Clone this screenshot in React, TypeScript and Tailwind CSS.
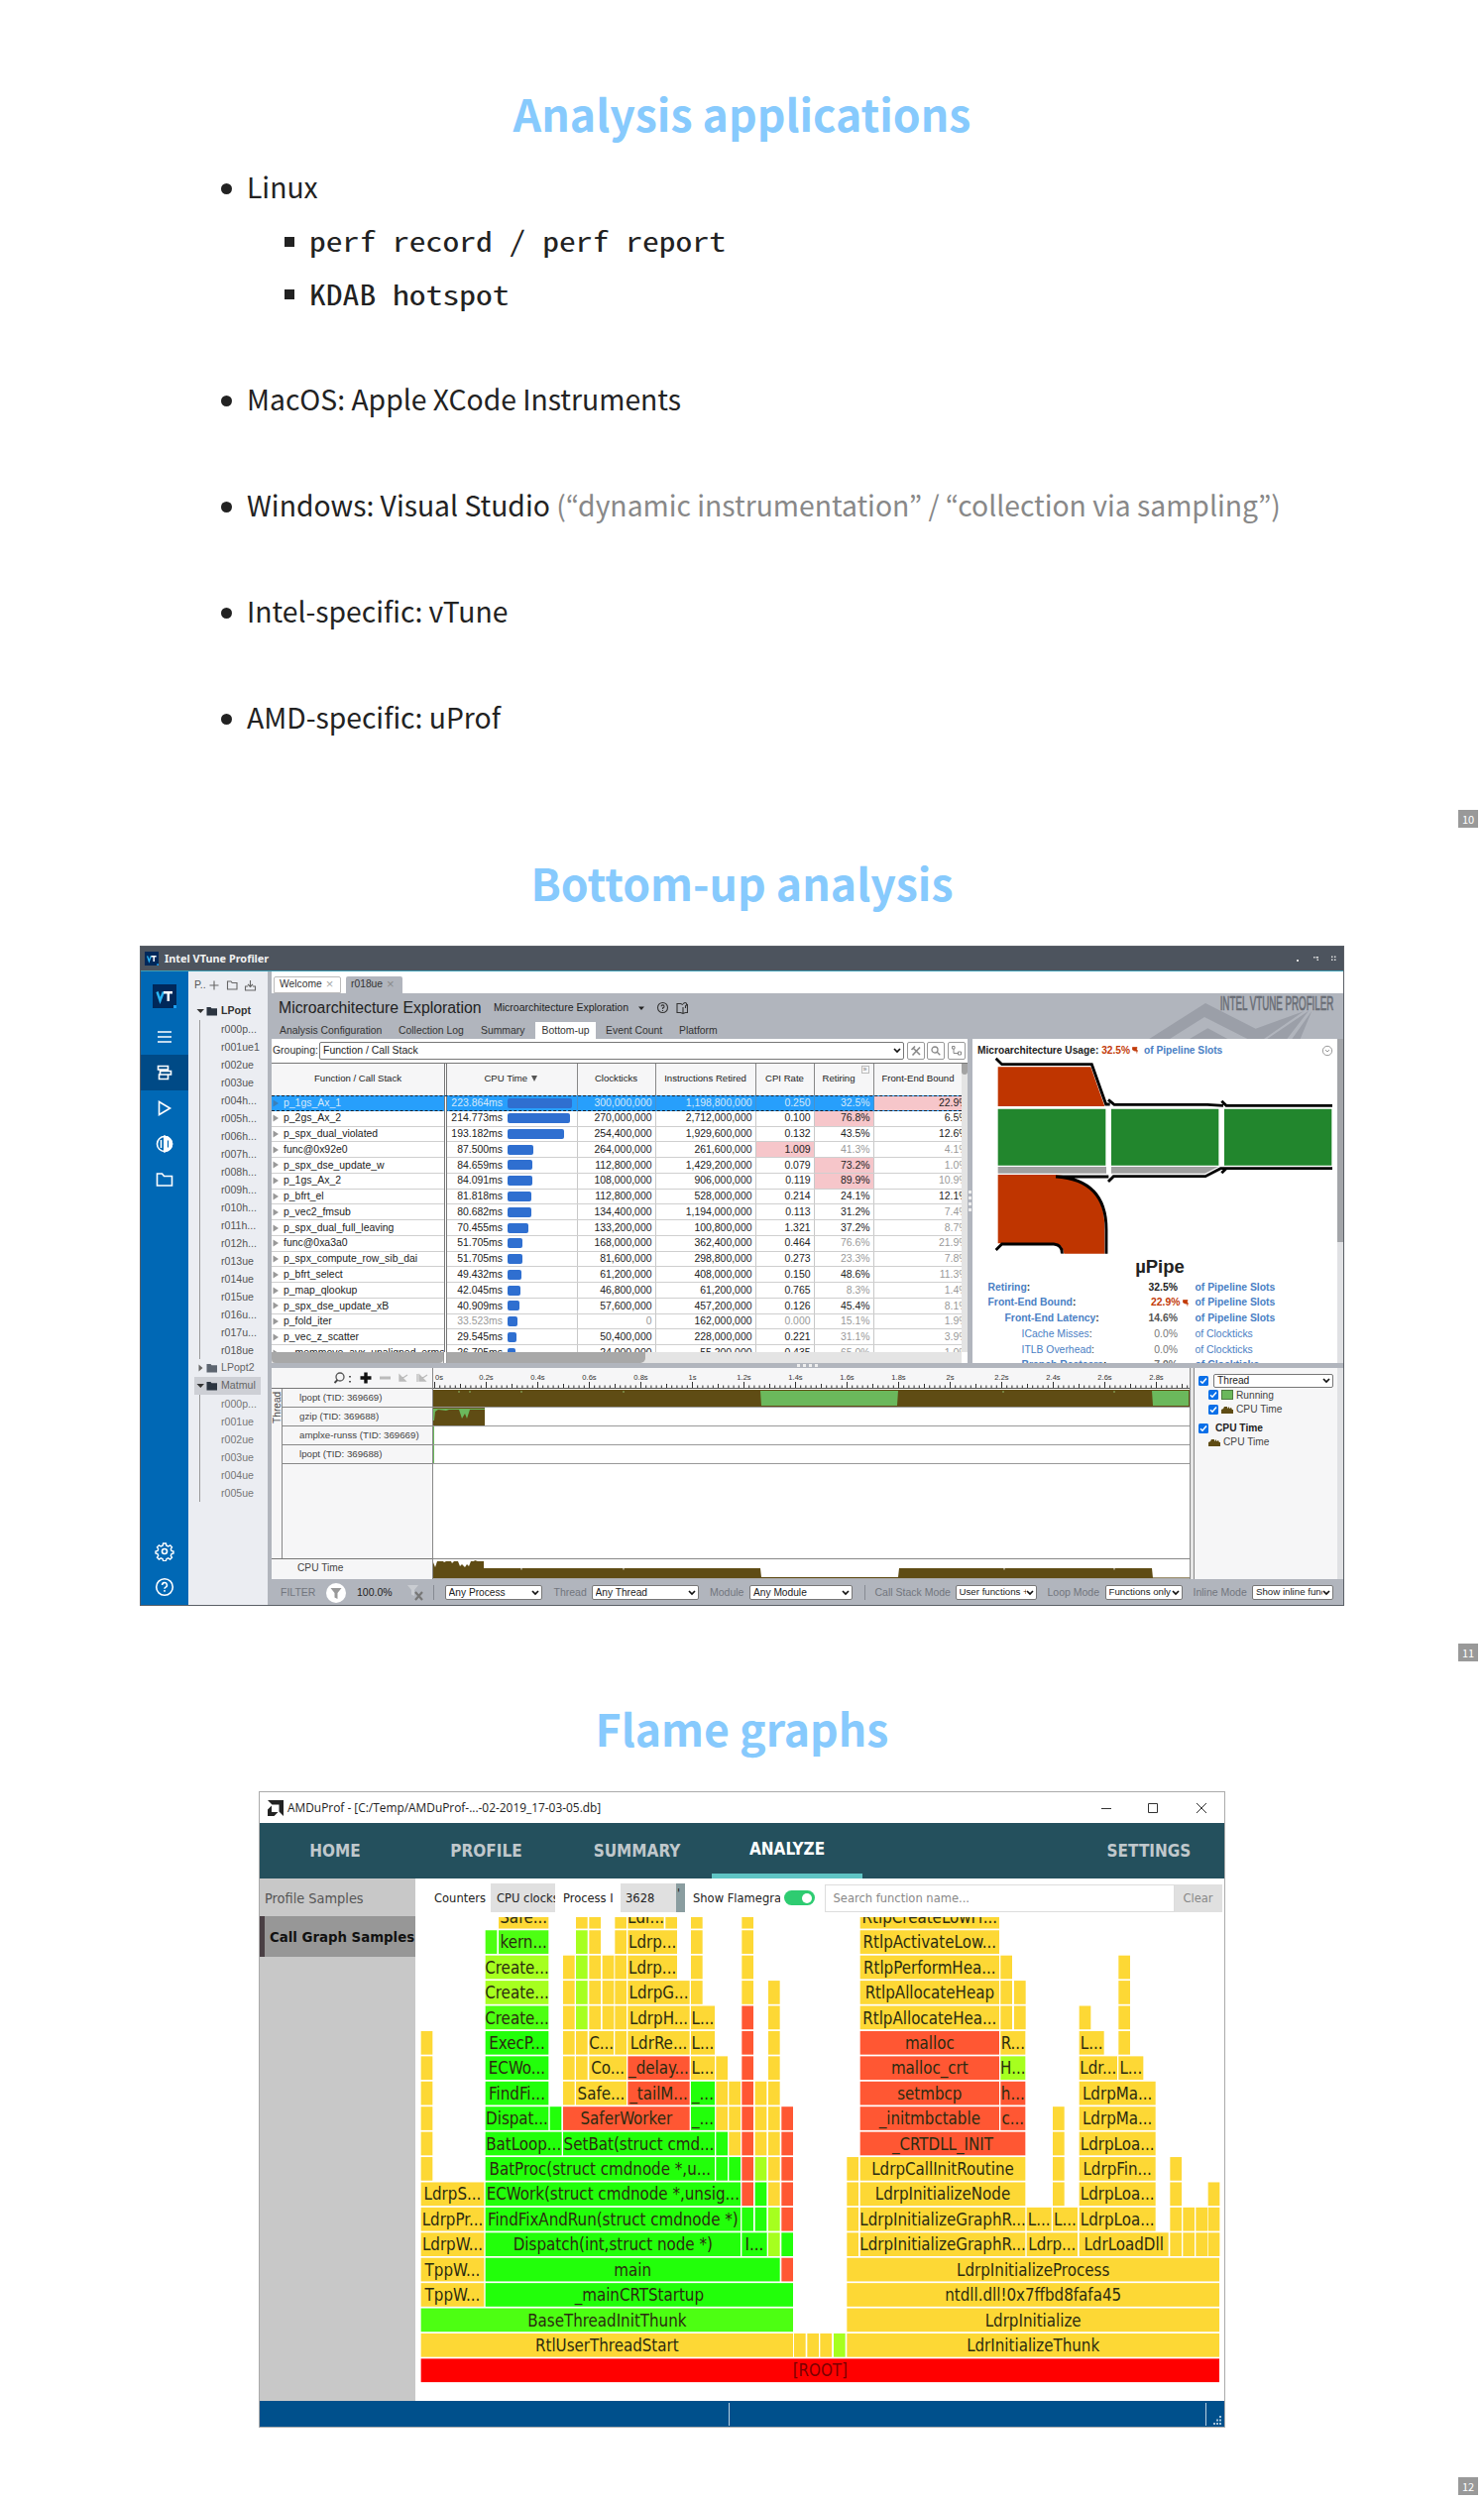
import React from "react";

const SLIDE = "font-['Noto_Sans_CJK_KR',sans-serif]";
const Y = "#fdd835";
const R = "#ff5733";
const G = "#22ff0a";
const G2 = "#4dff12";
const L = "#a6ff1f";

/* ---------- shared slide parts ---------- */

function PageNumber({ n }: { n: number }) {
  return (
    <div className="mr-[6px] mt-auto flex h-[18px] w-[20px] items-center justify-center self-end bg-[#999] font-['Noto_Sans_CJK_KR',sans-serif] text-[11px] leading-none text-white">
      {n}
    </div>
  );
}

function Title({ children, className }: { children: React.ReactNode; className: string }) {
  return (
    <h1 className={"whitespace-nowrap text-center font-['Noto_Sans_CJK_KR',sans-serif] text-[44.600px] font-bold leading-[60px] text-[#87cafd] " + className}>
      {children}
    </h1>
  );
}

function Item({ children, className = "" }: { children: React.ReactNode; className?: string }) {
  return (
    <li className={"flex h-[53.5px] items-center " + className}>
      <span className="mr-[15px] h-[11px] w-[11px] rounded-full bg-[#222]" />
      <span className="whitespace-nowrap pb-[4px]">{children}</span>
    </li>
  );
}

function SubItem({ children }: { children: React.ReactNode }) {
  return (
    <li className="flex h-[53.5px] items-center pl-[64px] font-['Noto_Sans_Mono_CJK_KR','Noto_Sans_Mono_CJK_SC','Liberation_Mono',monospace] text-[28px]">
      <span className="mr-[15px] h-[10px] w-[10px] bg-[#222]" />
      <span className="inline-block origin-left scale-x-[1.2] whitespace-pre pb-[3px]">{children}</span>
    </li>
  );
}

/* ---------- VTune window ---------- */

function VtLogo({ size }: { size: number }) {
  return (
    <svg width={size} height={size} viewBox="0 0 24 24">
      <rect width="24" height="24" fill="#00285a" />
      <path d="M4.5 7.5l3 9 3.4-9" fill="none" stroke="#29b6f6" strokeWidth="2.4" />
      <path d="M11 8.300h9M15.800 8v9" fill="none" stroke="#fff" strokeWidth="2.500" />
      <rect x="21" y="21" width="3" height="3" fill="#1da0f2" />
    </svg>
  );
}

function Folder({ fill }: { fill: string }) {
  return (
    <svg width="12" height="10" viewBox="0 0 12 10" className="mr-[3px]">
      <path d="M0.500 1h4l1 1.300h5.500v7.200h-10.500z" fill={fill} />
    </svg>
  );
}

function TreeFolder({ name, open, bold, sel }: { name: string; open?: boolean; bold?: boolean; sel?: boolean }) {
  return (
    <div className={"ml-[6px] flex h-[18px] w-[67px] items-center pl-[2px] " + (sel ? "bg-[#cdcfd5] " : "") + (bold ? "font-bold text-[#333]" : "text-[#666]")}>
      <svg width="10" height="8" viewBox="0 0 10 8">
        {open ? <path d="M0.500 2h7.500l-3.700 4z" fill="#333" /> : <path d="M2.500 0.500v7l4-3.500z" fill="#666" />}
      </svg>
      <Folder fill={open ? "#2b3440" : "#5d6570"} />
      {name}
    </div>
  );
}

function TreeLeaves({ names, color }: { names: string[]; color: string }) {
  return (
    <div className="ml-[11px] border-l border-[#999] pl-[21px]">
      {names.map((n, i) => (
        <div key={i} className={"h-[18px] leading-[18px] " + color}>{n}</div>
      ))}
    </div>
  );
}

function RailIcon({ children, className = "" }: { children: React.ReactNode; className?: string }) {
  return (
    <div className={"flex h-[36px] items-center justify-center " + className}>
      <svg width="20" height="20" viewBox="0 0 20 20" fill="none" stroke="#fff" strokeWidth="1.600">{children}</svg>
    </div>
  );
}

function Rail() {
  return (
    <div className="flex w-[48px] flex-col bg-[#0068b5]">
      <div className="flex h-[48px] items-end justify-center pb-[11px]"><VtLogo size={24} /></div>
      <RailIcon><path d="M3 5h14M3 10h14M3 15h14" /></RailIcon>
      <RailIcon className="bg-[#004a86]">
        <path d="M3.500 3.500h10v3.500h-10zM5.500 7v3M5.500 8.500h11v3.500h-11zM4.500 12h9v4.500h-9z" />
      </RailIcon>
      <RailIcon><path d="M4.500 3.500v13l11-6.500z" /></RailIcon>
      <RailIcon>
        <circle cx="10" cy="10" r="7.500" />
        <path d="M10 1.500v17" strokeWidth="2" />
        <path d="M10 2.500a7.500 7.500 0 0 1 0 15z" fill="#fff" />
        <path d="M6.500 6v8" />
        <path d="M13.500 6.500v7" stroke="#0068b5" strokeWidth="1.200" />
      </RailIcon>
      <RailIcon><path d="M2.500 4h5l2 2.500h8v9.500h-15z" /></RailIcon>
      <div className="mt-auto">
        <RailIcon>
          <circle cx="10" cy="10" r="2.500" />
          <path d="M8.600 2h2.800l.5 2.200 1.800.8 2-1.200 1.800 2-1.200 1.900.7 1.700 2 .6v2l-2 .6-.7 1.800 1.200 1.800-1.900 1.900-1.900-1.200-1.800.8-.5 2H8.600l-.5-2-1.800-.8-1.900 1.200-1.900-1.900 1.200-1.800L3 12.600 1 12v-2l2-.6.7-1.700-1.200-1.900 1.900-2 1.900 1.200 1.800-.8z" strokeWidth="1.400" />
        </RailIcon>
        <RailIcon>
          <circle cx="10" cy="10" r="8.300" />
          <path d="M7.600 8a2.400 2.400 0 1 1 3.500 2.100c-.8.400-1.100.8-1.100 1.600M10 13v1.700" />
        </RailIcon>
      </div>
    </div>
  );
}

const results = ["r000p...", "r001ue1", "r002ue", "r003ue", "r004h...", "r005h...", "r006h...", "r007h...", "r008h...", "r009h...", "r010h...", "r011h...", "r012h...", "r013ue", "r014ue", "r015ue", "r016u...", "r017u...", "r018ue"];
const matmul = ["r000p...", "r001ue", "r002ue", "r003ue", "r004ue", "r005ue"];

function Tree() {
  return (
    <div className="w-[80px] bg-[#ebedf2] text-[10.600px]">
      <div className="flex h-[31px] items-center pb-[4px] pl-[6px] text-[#555]">
        P..
        <svg width="50" height="14" viewBox="0 0 50 14" fill="none" stroke="#666" strokeWidth="1.100" className="ml-[3px]">
          <path d="M5 2.500v9M0.500 7h9M18.500 3h3.500l1.200 1.500h4.800v6.500h-9.500zM41.500 2v6M39 6l2.500 2.500 2.500-2.500M39 8h-2.500v4h10v-4h-2.500" />
        </svg>
      </div>
      <TreeFolder name="LPopt" open bold />
      <TreeLeaves names={results} color="text-[#555]" />
      <TreeFolder name="LPopt2" />
      <TreeFolder name="Matmul" open sel />
      <TreeLeaves names={matmul} color="text-[#777]" />
    </div>
  );
}

type Row = [string, string, number, string, string, string, string, string, string];
/* name, time, bar px, clockticks, instructions, cpi, retiring, front-end, flags:
   t/c = dim time/clockticks, i = hot cpi, I = dim cpi, r = hot retiring, R = dim retiring, F = dim front-end */
const rows: Row[] = [
  ["p_1gs_Ax_1", "223.864ms", 65, "300,000,000", "1,198,800,000", "0.250", "32.5%", "22.9%", ""],
  ["p_2gs_Ax_2", "214.773ms", 63, "270,000,000", "2,712,000,000", "0.100", "76.8%", "6.5%", "r"],
  ["p_spx_dual_violated", "193.182ms", 57, "254,400,000", "1,929,600,000", "0.132", "43.5%", "12.6%", ""],
  ["func@0x92e0", "87.500ms", 26, "264,000,000", "261,600,000", "1.009", "41.3%", "4.1%", "iRF"],
  ["p_spx_dse_update_w", "84.659ms", 25, "112,800,000", "1,429,200,000", "0.079", "73.2%", "1.0%", "rF"],
  ["p_1gs_Ax_2", "84.091ms", 25, "108,000,000", "906,000,000", "0.119", "89.9%", "10.9%", "rF"],
  ["p_bfrt_el", "81.818ms", 24, "112,800,000", "528,000,000", "0.214", "24.1%", "12.1%", ""],
  ["p_vec2_fmsub", "80.682ms", 24, "134,400,000", "1,194,000,000", "0.113", "31.2%", "7.4%", "F"],
  ["p_spx_dual_full_leaving", "70.455ms", 21, "133,200,000", "100,800,000", "1.321", "37.2%", "8.7%", "F"],
  ["func@0xa3a0", "51.705ms", 15, "168,000,000", "362,400,000", "0.464", "76.6%", "21.9%", "RF"],
  ["p_spx_compute_row_sib_dai", "51.705ms", 15, "81,600,000", "298,800,000", "0.273", "23.3%", "7.8%", "RF"],
  ["p_bfrt_select", "49.432ms", 14, "61,200,000", "408,000,000", "0.150", "48.6%", "11.3%", "F"],
  ["p_map_qlookup", "42.045ms", 13, "46,800,000", "61,200,000", "0.765", "8.3%", "1.4%", "RF"],
  ["p_spx_dse_update_xB", "40.909ms", 12, "57,600,000", "457,200,000", "0.126", "45.4%", "8.1%", "F"],
  ["p_fold_iter", "33.523ms", 10, "0", "162,000,000", "0.000", "15.1%", "1.9%", "tcIRF"],
  ["p_vec_z_scatter", "29.545ms", 9, "50,400,000", "228,000,000", "0.221", "31.1%", "3.9%", "RF"],
  ["__memmove_avx_unaligned_erms", "26.705ms", 8, "24,000,000", "55,200,000", "0.435", "65.0%", "1.0%", "RF"],
];

const cell = "flex shrink-0 items-center justify-end pr-[3px] border-l ";

function GridRow({ r, sel }: { r: Row; sel: boolean }) {
  const f = r[8];
  const c = (dim: string, hot = "") =>
    cell + (sel ? "border-[#4a90c8] " : "border-[#c8c8c8] ") + (f.includes(dim) ? "text-[#999] " : "") + (hot && f.includes(hot) ? "bg-[#f6c6ca] " : "");
  return (
    <div className={"flex h-[15.780px] shrink-0 " + (sel ? "border-y border-dashed border-[#123] bg-[#279ffc] text-[#d6e9fa]" : "border-b border-[#cfcfcf]")}>
      <div className="flex w-[174px] shrink-0 items-center whitespace-nowrap">
        <svg width="12" height="8" viewBox="0 0 12 8" className="shrink-0"><path d="M1.500 0.500v7l5.500-3.500z" fill={sel ? "#3b7fb8" : "#999"} /></svg>
        {r[0]}
      </div>
      <div className="h-[17px] w-[3px] shrink-0 border-x border-[#777] bg-white" />
      <div className={"flex w-[130.500px] shrink-0 items-center " + (f.includes("t") ? "text-[#999]" : "")}>
        <span className="w-[56px] text-right">{r[1]}</span>
        <span className="ml-[5px] h-[10px] rounded-[2px] bg-[#2f6fd0]" style={{ width: r[2] }} />
      </div>
      <div className={c("c") + " w-[79px]"}>{r[3]}</div>
      <div className={c("~") + " w-[101px]"}>{r[4]}</div>
      <div className={c("I", "i") + " w-[59px]"}>{r[5]}</div>
      <div className={c("R", "r") + " w-[60px]"}>{r[6]}</div>
      <div className={c("F") + " w-[89px] overflow-hidden !justify-start " + (sel ? "bg-[#f6c6ca] !text-[#222]" : "")}>
        <span className="w-[95px] shrink-0 text-right">{r[7]}</span>
      </div>
    </div>
  );
}

function Head({ w, children }: { w: string; children: React.ReactNode }) {
  return <div className={"flex shrink-0 items-center justify-center overflow-hidden whitespace-nowrap border-l border-[#888] pb-[2px] text-[9.600px] " + w}>{children}</div>;
}

function Chevron() {
  return (
    <svg width="8" height="6" viewBox="0 0 8 6" className="shrink-0"><path d="M1 1l3 3 3-3" fill="none" stroke="#111" strokeWidth="1.700" /></svg>
  );
}

function Select({ children, className }: { children: React.ReactNode; className: string }) {
  return (
    <div className={"flex shrink-0 items-center rounded-[2px] border border-[#777] bg-white pl-[3px] pr-[2px] text-[#222] " + className}>
      <span className="min-w-0 flex-1 overflow-hidden whitespace-nowrap">{children}</span>
      <Chevron />
    </div>
  );
}

function SmallButton({ children }: { children: React.ReactNode }) {
  return (
    <div className="ml-[2.500px] flex h-[18px] w-[18px] shrink-0 items-center justify-center rounded-[2px] border border-[#999]">
      <svg width="12" height="12" viewBox="0 0 12 12" fill="none" stroke="#888" strokeWidth="1.300">{children}</svg>
    </div>
  );
}

function Grid() {
  return (
    <div className="flex w-[702px] flex-col bg-white text-[10.450px] text-[#222]">
      <div className="flex h-[25px] shrink-0 items-center border-b border-[#777] pl-[1px]">
        <span className="w-[47px] text-[#333]">Grouping:</span>
        <Select className="h-[18px] w-[590px]">Function / Call Stack</Select>
        <SmallButton><path d="M3.500 3.500l6.500 6.500M10 2.500l-7.500 8M1.500 5l3.500-3.500" strokeWidth="1.600" /></SmallButton>
        <SmallButton><circle cx="5" cy="5" r="3" /><path d="M7.300 7.300l3 3" /></SmallButton>
        <SmallButton><path d="M1.500 1.500h2.500v2.500h-2.500zM3 4v4.500h4M7.500 7h3v3h-3z" strokeWidth="1" /></SmallButton>
      </div>
      <div className="flex min-h-0 flex-1">
        <div className="flex w-[695.500px] flex-col overflow-hidden">
          <div className="flex h-[32px] shrink-0 bg-[#f6f6f7]">
            <div className="flex w-[174px] shrink-0 items-center justify-center pb-[2px] text-[9.600px]">Function / Call Stack</div>
            <div className="w-[3px] shrink-0 border-x border-[#777] bg-white" />
            <div className="flex w-[130.500px] shrink-0 items-center justify-center pb-[2px] pr-[2px] text-[9.600px]">
              CPU Time
              <svg width="6" height="6" viewBox="0 0 6 6" className="ml-[4px]"><path d="M0 0h6l-3 6z" fill="#555" /></svg>
            </div>
            <Head w="w-[79px]">Clockticks</Head>
            <Head w="w-[101px]">Instructions Retired</Head>
            <Head w="w-[59px]">CPI Rate</Head>
            <Head w="w-[60px] gap-[6px] pl-[4px]">
              <span>Retiring</span>
              <span className="mb-[18px] h-[8px] w-[8px] border border-[#bbb] text-center text-[7px] leading-[5px] text-[#777]">»</span>
            </Head>
            <Head w="w-[90px]">Front-End Bound</Head>
          </div>
          <div className="flex h-[259px] flex-col overflow-hidden">
            {rows.map((r, i) => <GridRow key={i} r={r} sel={i === 0} />)}
          </div>
          <div className="flex h-[11px] shrink-0 bg-[#e4e4e4]">
            <div className="w-[173px] rounded-b-[4px] bg-[#a8a8a8]" />
            <div className="w-[4px] border-x border-[#999] bg-white" />
            <div className="w-[200px] rounded-br-[5px] bg-[#a8a8a8]" />
          </div>
        </div>
        <div className="mb-[11px] flex-1 bg-[#e4e4e4]"><div className="h-[11px] rounded-b-[3px] bg-[#a3a3a3]" /></div>
      </div>
    </div>
  );
}

function Flag() {
  return <svg width="6" height="7" viewBox="0 0 6 7" className="mx-[2px]"><path d="M0.500 0.500H5L4.500 2.500 5.500 4.300 2.500 4 0.500 3zM4.800 3.500V6.500" fill="#c23a08" stroke="#c23a08" strokeWidth="0.700" /></svg>;
}

function Metric({ pad, name, value, of, tone = "" }: { pad: string; name: string; value: string; of: string; tone?: string }) {
  return (
    <div className={"flex h-[15.750px] shrink-0 items-center whitespace-nowrap pl-[15.500px] " + tone}>
      <div className={"w-[155px] text-[#4a80c4] " + pad}>{name}<span className="text-[#333]">:</span></div>
      {value === "22.9%" ? (
        <div className="flex w-[54px] items-center justify-end pr-[5px] text-[#c23a08]"><span>{value}</span><Flag /></div>
      ) : (
        <div className="w-[54px] pr-[17.500px] text-right">{value}</div>
      )}
      <div className="text-[#4a80c4]">{of}</div>
    </div>
  );
}

function Pipe() {
  return (
    <svg width="368.330" height="200" viewBox="33 345 1105 600" className="shrink-0">
      <path d="M110 376h281l42 119H110z" fill="#bf3500" />
      <path d="M110 702h175q148 14 148 160v79H310q-4-31-33-31H110z" fill="#bf3500" />
      <path d="M110 503h326v171H110zM453 503h325v171H453zM795 503h325v171H795z" fill="#22862d" />
      <path d="M110 678h328v20H110zM453 678h324l-40 20H453z" fill="#a0a0a0" />
      <path d="M104 350l18 18h272l43 121h12M444 475l18 15h282l48 3M787 479l14 14h321M444 723l16-16h278l46-24h338M787 697l14-14M285 708h160M285 708q153 9 153 160v73M104 930l18-18h157q26 2 25 29" fill="none" stroke="#000" strokeWidth="8.500" />
    </svg>
  );
}

function Usage() {
  return (
    <div className="flex w-[368px] flex-col overflow-hidden bg-white text-[10.400px] font-bold text-[#222]">
      <div className="flex h-[18px] shrink-0 items-center whitespace-nowrap pl-[5px] pt-[5px] text-[10.200px]">
        Microarchitecture Usage:&nbsp;<span className="text-[#c23a08]">32.5%</span><Flag />
        <span className="ml-[4px] text-[#4a80c4]">of Pipeline Slots</span>
        <svg width="12" height="12" viewBox="0 0 12 12" className="ml-auto mr-[4px]" fill="none" stroke="#999"><circle cx="6" cy="6" r="4.700" /><path d="M4 5l2 2 2-2" /></svg>
      </div>
      <Pipe />
      <div className="h-[24.500px] shrink-0 pl-[10px] text-center text-[18.500px] leading-[23px]">µPipe</div>
      <Metric pad="" name="Retiring" value="32.5%" of="of Pipeline Slots" />
      <Metric pad="" name="Front-End Bound" value="22.9%" of="of Pipeline Slots" />
      <Metric pad="pl-[17px]" name="Front-End Latency" value="14.6%" of="of Pipeline Slots" tone="text-[#555]" />
      <Metric pad="pl-[34px]" name="ICache Misses" value="0.0%" of="of Clockticks" tone="font-normal text-[#777]" />
      <Metric pad="pl-[34px]" name="ITLB Overhead" value="0.0%" of="of Clockticks" tone="font-normal text-[#777]" />
      <Metric pad="pl-[34px]" name="Branch Resteers" value="7.9%" of="of Clockticks" tone="text-[#777]" />
    </div>
  );
}

function Ruler() {
  const ticks = Array.from({ length: 147 }, (_, i) => i);
  const labels = ["0s", "0.2s", "0.4s", "0.6s", "0.8s", "1s", "1.2s", "1.4s", "1.6s", "1.8s", "2s", "2.2s", "2.4s", "2.6s", "2.8s"];
  return (
    <div className="h-[21px] shrink-0 border-b border-[#555] bg-[#f6f6f7]">
      <svg width="763" height="20" viewBox="0 0 763 20" className="block">
        {ticks.map((i) => (
          <path key={i} d={`M${1.5 + i * 5.2} ${i % 10 === 0 ? 14 : i % 5 === 0 ? 16 : 17.5}v6`} stroke="#333" />
        ))}
        {labels.map((t, i) => (
          <text key={t} x={i === 0 ? 6 : 1.5 + i * 52} y="11.500" fontSize="7.600" textAnchor="middle" fill="#333">{t}</text>
        ))}
      </svg>
    </div>
  );
}

function Track({ children, h }: { children?: React.ReactNode; h: string }) {
  return (
    <div className={"w-[763px] shrink-0 border-b border-[#999] bg-white " + h}>
      <svg width="763" height="18" viewBox="0 0 763 18" className="block">{children}</svg>
    </div>
  );
}

function Check({ className = "" }: { className?: string }) {
  return (
    <svg width="10" height="10" viewBox="0 0 10 10" className={"shrink-0 " + className}>
      <rect width="10" height="10" rx="1.500" fill="#0a6fe8" />
      <path d="M2 5.200l2 2 4-4.700" fill="none" stroke="#fff" strokeWidth="1.500" />
    </svg>
  );
}

function CpuGlyph() {
  return <svg width="12" height="8" viewBox="0 0 12 8" className="mx-[3px] shrink-0"><path d="M0 8V4l2-1 1-2h3v2l2-2v2l2-1 1 2h1v4z" fill="#5f4c14" /></svg>;
}

function TimelineLabels() {
  return (
    <div className="w-[163px] border-r border-[#888] bg-[#f6f6f7] text-[10.200px] text-[#444]">
      <div className="flex h-[21px] items-center justify-end border-b border-[#777] pr-[4px]">
        <svg width="100" height="14" viewBox="0 0 100 14" fill="none">
          <circle cx="11" cy="6" r="4" stroke="#555" strokeWidth="1.300" />
          <path d="M8.500 9l-3 3M21 5v1.500M21 10v1.500" stroke="#444" strokeWidth="1.800" />
          <path d="M37 1.500v11M31.500 7h11" stroke="#111" strokeWidth="3.400" />
          <path d="M51 7h11" stroke="#bbb" strokeWidth="3" />
          <path d="M71 4v6h6zM73 8l6-4M91 4v6h6zM93 8l6-4M89 3v8" fill="#bbb" stroke="#bbb" strokeWidth="1.300" />
        </svg>
      </div>
      <div className="flex h-[172px] border-b border-[#777]">
        <div className="w-[11px] border-r border-[#888]">
          <div className="h-[38px] rotate-180 text-center leading-[11px] [writing-mode:vertical-rl]">Thread</div>
        </div>
        <div className="flex-1">
          {["lpopt (TID: 369669)", "gzip (TID: 369688)", "amplxe-runss (TID: 369669)", "lpopt (TID: 369688)"].map((t) => (
            <div key={t} className="h-[19px] border-b border-[#888] pl-[17px] text-[9.700px] leading-[17px]">{t}</div>
          ))}
        </div>
      </div>
      <div className="h-[20px] pl-[26px] leading-[17px]">CPU Time</div>
    </div>
  );
}

function Timeline() {
  return (
    <div className="flex h-[213px] shrink-0">
      <TimelineLabels />
      <div className="flex w-[763px] flex-col bg-white">
        <Ruler />
        <Track h="h-[19px]">
          <rect y="1" width="763" height="17" fill="#5f4c14" />
          <path d="M330 2h139l-1 15H331zM725 2h37v15h-36z" fill="#6bb85c" />
          <path d="M26 2v2M37 2v2M89 2v2M192 2v2M575 2v2M687 2v2" stroke="#8fb96a" />
        </Track>
        <Track h="h-[19px]">
          <rect width="52" height="18" fill="#5f4c14" />
          <path d="M0 1h52v1H37l-3 9-2-5-3 5-3-9H16l-3 1-8-1-3 2-1 9H0z" fill="#6bb85c" />
        </Track>
        <Track h="h-[19px]"><path d="M0.500 0v18" stroke="#6bb85c" /></Track>
        <Track h="h-[19px]"><path d="M0.500 0v18" stroke="#6bb85c" /></Track>
        <div className="h-[96px] shrink-0 border-b border-[#888]" />
        <div className="h-[20px] shrink-0 border-b border-[#aaa]">
          <svg width="763" height="19" viewBox="0 0 763 19" className="block">
            <path d="M0 19V3l2 5 2-6h6l1 1 2-1h5l1 2 2-2h4l2 5 2-2 3 3 2-3 2 2 2-5h3l1-1 3 1h6V9H330l1 9h138l1-9h255l1 10z" fill="#5f4c14" />
            <path d="M0 18.500h763" stroke="#5f4c14" strokeWidth="0.600" />
            <path d="M89 9v1.500M192 9v1.500M576 9v1.500M687 9v1.500" stroke="#eee" />
          </svg>
        </div>
      </div>
      <div className="w-[5px] border-x border-[#888] bg-[#e6e6e6]" />
      <div className="w-[144px] bg-[#f6f6f7] pl-[4px] pt-[5px] text-[10.200px] text-[#444]">
        <div className="flex h-[15px] items-center"><Check className="mr-[5px]" /><Select className="h-[14px] w-[121px]">Thread</Select></div>
        <div className="flex h-[14.500px] items-center pl-[10px]">
          <Check /><span className="mx-[3px] h-[10px] w-[12px] border border-[#4d7b40] bg-[#6bb85c]" />Running
        </div>
        <div className="flex h-[15px] items-center pl-[10px]"><Check /><CpuGlyph />CPU Time</div>
        <div className="mt-[4px] flex h-[14px] items-center font-bold text-[#222]"><Check className="mr-[7px]" />CPU Time</div>
        <div className="flex h-[15px] items-center pl-[7px]"><CpuGlyph />CPU Time</div>
      </div>
      <div className="w-[6px] bg-[#e0e1e4]" />
    </div>
  );
}

function FilterBar() {
  return (
    <div className="flex h-[26px] shrink-0 items-center whitespace-nowrap bg-[#b1b5bd] pl-[9px] pt-[1px] text-[10.500px] text-[#72767e]">
      <span className="w-[46px]">FILTER</span>
      <svg width="20" height="20" viewBox="0 0 20 20"><circle cx="10" cy="10" r="10" fill="#fff" /><path d="M4.500 5h11l-4 5v6l-3-1.500V10z" fill="#999" /></svg>
      <span className="ml-[11px] w-[50px] text-[#222]">100.0%</span>
      <svg width="18" height="17" viewBox="0 0 18 17"><path d="M1 1h11l-4 5v6l-3-1.500V6z" fill="#c9ccd1" /><path d="M9 8l7 8M16 8l-7 8" stroke="#777" strokeWidth="2.200" /></svg>
      <span className="ml-[9px] h-[15px] w-px bg-[#868a92]" />
      <Select className="ml-[10.500px] h-[15px] w-[98px] text-[10.200px]">Any Process</Select>
      <span className="ml-[12px] w-[38px]">Thread</span>
      <Select className="h-[15px] w-[108.500px] text-[10.200px]">Any Thread</Select>
      <span className="ml-[11px] w-[40px]">Module</span>
      <Select className="h-[15px] w-[104px] text-[10.200px]">Any Module</Select>
      <span className="ml-[11.500px] h-[15px] w-px bg-[#868a92]" />
      <span className="ml-[10px] w-[81px]">Call Stack Mode</span>
      <Select className="h-[15px] w-[82px] text-[9.700px]">User functions +1</Select>
      <span className="ml-[11px] w-[58px]">Loop Mode</span>
      <Select className="h-[15px] w-[78px] text-[9.700px]">Functions only</Select>
      <span className="ml-[11px] w-[59.500px]">Inline Mode</span>
      <Select className="h-[15px] w-[82px] text-[9.700px]">Show inline functions</Select>
    </div>
  );
}

function VTune() {
  return (
    <div className="mx-auto flex h-[666px] w-[1215px] flex-col border border-[#5a5f66] font-['Liberation_Sans',sans-serif] text-[10.400px]">
      <div className="flex h-[25px] shrink-0 items-center border-b border-[#3f9fb5] bg-[#4d545e] pl-[4px] font-['Noto_Sans',sans-serif] text-[10.900px] font-bold text-[#f2f2f2]">
        <VtLogo size={14} />
        <span className="ml-[6px]">Intel VTune Profiler</span>
        <svg width="44" height="8" viewBox="0 0 44 8" className="ml-auto mr-[6px]" fill="#ddd">
          <path d="M3 5h2v2H3zM20 2h1.500v1.500H20zM22.500 2H25v1.500h-2.500zM23.500 4.500H25V6h-1.500zM38 1.500h1.500V3H38zM41 1.500h1.500V3H41zM38 4.500h1.500V6H38zM41 4.500h1.500V6H41z" />
        </svg>
      </div>
      <div className="flex min-h-0 flex-1">
        <Rail />
        <Tree />
        <div className="w-[4px] bg-[#b1b5bd]" />
        <div className="flex w-[1081px] flex-col bg-[#b1b5bd]">
          <div className="flex h-[22px] shrink-0 items-end bg-white pl-[2px] text-[10.300px] text-[#333]">
            <div className="mr-[5px] flex h-[17px] w-[68px] items-center rounded-t-[2px] border border-[#bbb] bg-white pb-[2px] pl-[5px]">Welcome<span className="ml-[4px] text-[13px] leading-none text-[#aaa]">×</span></div>
            <div className="flex h-[17px] w-[57px] items-center rounded-t-[2px] bg-[#b1b5bd] pb-[2px] pl-[5px]">r018ue<span className="ml-[4px] text-[13px] leading-none text-[#8a8a8a]">×</span></div>
          </div>
          <div className="relative flex h-[46px] shrink-0 flex-col">
            <svg width="200" height="46" viewBox="555 153 600 138" className="absolute right-0 top-0">
              <path d="M568 291L738 183l152 77 145-52-120 83h-50l-130-66-105 66zM690 291l55-32 60 32zM925 291l125-85-65 85zM1000 291l60-85-35 85z" fill="#9b9fa8" />
              <text x="782" y="205" textLength="344" lengthAdjust="spacingAndGlyphs" fontSize="58" fill="#696d75" stroke="#696d75" strokeWidth="2">INTEL VTUNE PROFILER</text>
            </svg>
            <div className="flex h-[29px] items-center whitespace-nowrap pl-[7px] text-[#222]">
              <span className="w-[217px] text-[15.800px]">Microarchitecture Exploration</span>
              <span className="w-[146px] text-[10.500px]">Microarchitecture Exploration</span>
              <svg width="50" height="14" viewBox="0 0 50 14" fill="none" stroke="#333" strokeWidth="1.100">
                <path d="M0 5.500h6l-3 3.500z" fill="#222" stroke="none" />
                <circle cx="24.500" cy="6.500" r="5" />
                <path d="M23 5.200a1.500 1.500 0 1 1 1.500 1.700V8M24.500 9v1M45 3.500L42.500 2.500H39v9h3.500L45 12.500l2.500-1h3V5M45 12.500V6M45.500 3a1.600 1.600 0 1 1 2 1.700V7" />
                <path d="M49.500 3v9" />
              </svg>
            </div>
            <div className="flex h-[17px] whitespace-nowrap pl-[8px] text-[10.400px] leading-[17px] text-[#333]">
              <span className="w-[120px]">Analysis Configuration</span>
              <span className="w-[83px]">Collection Log</span>
              <span className="w-[55px]">Summary</span>
              <span className="mr-[10px] w-[61px] bg-white text-center">Bottom-up</span>
              <span className="w-[74px]">Event Count</span>
              <span>Platform</span>
            </div>
          </div>
          <div className="flex h-[327px] shrink-0">
            <Grid />
            <div className="flex w-[5px] flex-col items-center justify-center gap-[3px]">
              {[0, 1, 2, 3].map((i) => <span key={i} className="h-[3px] w-[3px] bg-[#eee]" />)}
            </div>
            <Usage />
            <div className="flex-1 bg-[#e0e1e4]"><div className="h-[205px] bg-[#a3a5a9]" /></div>
          </div>
          <div className="flex h-[5px] shrink-0 items-center justify-center gap-[3px]">
            {[0, 1, 2, 3].map((i) => <span key={i} className="h-[3px] w-[3px] bg-[#eee]" />)}
          </div>
          <Timeline />
          <FilterBar />
        </div>
      </div>
    </div>
  );
}

/* ---------- uProf window ---------- */

/* Each frame is [start, end, colour, label]; positions are in thirds of a pixel. */
type Frame = [number, number, string, string?];
const u = (color: string, ...starts: number[]): Frame[] => starts.map((s) => [s, s + 35, color]);

const levels: Frame[][] = [
  [[509, 2925, "#ff0000", "[ROOT]"]],
  [[509, 1635, Y, "RtlUserThreadStart"], ...u(Y, 1638, 1678, 1717), ...u(L, 1758), [1798, 2925, Y, "LdrInitializeThunk"]],
  [[509, 1635, G2, "BaseThreadInitThunk"], [1798, 2925, Y, "LdrpInitialize"]],
  [[509, 700, Y, "TppW..."], [704, 1635, G, "_mainCRTStartup"], [1798, 2925, Y, "ntdll.dll!0x7ffbd8fafa45"]],
  [[509, 700, Y, "TppW..."], [704, 1595, G, "main"], ...u(R, 1600), [1798, 2925, Y, "LdrpInitializeProcess"]],
  [[509, 700, Y, "LdrpW..."], [704, 1476, G, "Dispatch(int,struct node *)"], [1480, 1556, G, "I..."], ...u(L, 1560), ...u(G, 1600), ...u(Y, 1798), [1838, 2338, Y, "LdrpInitializeGraphR..."], [2342, 2496, Y, "Ldrp..."], [2501, 2771, Y, "LdrLoadDll"], ...u(Y, 2776, 2815, 2854, 2891)],
  [[509, 700, Y, "LdrpPr..."], [704, 1476, G, "FindFixAndRun(struct cmdnode *)"], ...u(G, 1480, 1520), ...u(L, 1560), ...u(R, 1600), ...u(Y, 1798), [1838, 2338, Y, "LdrpInitializeGraphR..."], [2342, 2417, Y, "L..."], [2421, 2496, Y, "L..."], [2501, 2732, Y, "LdrpLoa..."], ...u(Y, 2776, 2815, 2854, 2891)],
  [[509, 700, Y, "LdrpS..."], [704, 1476, G, "ECWork(struct cmdnode *,unsig..."], ...u(R, 1480), ...u(G, 1520), ...u(Y, 1560), ...u(R, 1600), ...u(Y, 1798), [1838, 2338, Y, "LdrpInitializeNode"], ...u(Y, 2421), [2501, 2732, Y, "LdrpLoa..."], ...u(Y, 2776, 2891)],
  [...u(Y, 509), [704, 1398, G, "BatProc(struct cmdnode *,u..."], ...u(G, 1402, 1441), ...u(R, 1480), ...u(L, 1520), ...u(Y, 1560), ...u(R, 1600), ...u(Y, 1798), [1838, 2338, Y, "LdrpCallInitRoutine"], ...u(Y, 2421), [2501, 2732, Y, "LdrpFin..."], ...u(Y, 2776)],
  [...u(Y, 509), [704, 935, G, "BatLoop..."], [939, 1398, G, "SetBat(struct cmd..."], ...u(G, 1402), ...u(Y, 1441), ...u(R, 1480), ...u(Y, 1520, 1560), ...u(R, 1600), [1838, 2338, R, "_CRTDLL_INIT"], ...u(Y, 2421), [2501, 2732, Y, "LdrpLoa..."]],
  [...u(Y, 509), [704, 895, G, "Dispat..."], ...u(G, 899), [939, 1322, R, "SaferWorker"], [1326, 1398, G, "_..."], ...u(Y, 1402, 1441), ...u(R, 1480), ...u(Y, 1520, 1560), ...u(R, 1600), [1838, 2259, R, "_initmbctable"], [2263, 2338, R, "c..."], ...u(Y, 2421), [2501, 2732, Y, "LdrpMa..."]],
  [...u(Y, 509), [704, 895, G, "FindFi..."], ...u(Y, 939), [978, 1131, Y, "Safe..."], [1135, 1322, R, "_tailM..."], [1326, 1398, G, "_..."], ...u(Y, 1402, 1441), ...u(R, 1480), ...u(Y, 1520, 1560), [1838, 2259, R, "setmbcp"], [2263, 2338, R, "h..."], [2501, 2732, Y, "LdrpMa..."]],
  [...u(Y, 509), [704, 895, G, "ECWo..."], ...u(Y, 939, 978), [1018, 1131, Y, "Co..."], [1135, 1322, R, "_delay..."], [1326, 1398, Y, "L..."], ...u(Y, 1402), ...u(R, 1480), ...u(Y, 1560), [1838, 2259, R, "malloc_crt"], [2263, 2338, L, "H..."], [2501, 2616, Y, "Ldr..."], [2620, 2695, Y, "L..."]],
  [...u(Y, 509), [704, 895, G, "ExecP..."], ...u(Y, 939, 978), [1018, 1092, Y, "C..."], ...u(Y, 1096), [1135, 1322, Y, "LdrRe..."], [1326, 1398, Y, "L..."], ...u(R, 1480), ...u(Y, 1560), [1838, 2259, R, "malloc"], [2263, 2338, Y, "R..."], [2501, 2576, Y, "L..."], ...u(Y, 2620)],
  [[704, 895, G2, "Create..."], ...u(Y, 939), ...u(L, 978), ...u(Y, 1018, 1058, 1096), [1135, 1322, Y, "LdrpH..."], [1326, 1398, Y, "L..."], ...u(R, 1480), ...u(Y, 1560), [1838, 2259, Y, "RtlpAllocateHea..."], ...u(Y, 2263, 2304, 2501, 2620)],
  [[704, 895, L, "Create..."], ...u(Y, 939), ...u(L, 978), ...u(Y, 1018, 1058, 1096), [1135, 1322, Y, "LdrpG..."], ...u(Y, 1326, 1480, 1560), [1838, 2259, Y, "RtlpAllocateHeap"], ...u(Y, 2263, 2304, 2620)],
  [[704, 895, L, "Create..."], ...u(Y, 939), ...u(L, 978), ...u(Y, 1018, 1058, 1096), [1135, 1284, Y, "Ldrp..."], ...u(Y, 1326, 1480), [1838, 2259, Y, "RtlpPerformHea..."], ...u(Y, 2263, 2620)],
  [...u(G2, 704), [744, 895, G2, "kern..."], ...u(L, 978), ...u(Y, 1018, 1096), [1135, 1284, Y, "Ldrp..."], ...u(Y, 1326, 1480), [1838, 2259, Y, "RtlpActivateLow..."]],
  [[744, 895, Y, "Safe..."], ...u(Y, 978, 1018, 1096), [1135, 1244, Y, "Ldr..."], ...u(Y, 1249, 1326, 1480), [1838, 2259, Y, "RtlpCreateLowFr..."]],
];

function FlameGraph() {
  return (
    <svg width="816" height="488" viewBox="419 1934 816 488" className="block font-['DejaVu_Sans_Condensed','DejaVu_Sans',sans-serif]">
      {levels.map((frames, k) =>
        frames.map(([a, b, color, label], i) => {
          const x = 255 + a / 3;
          const w = (b - a) / 3;
          const y = 2379.400 - k * 25.420;
          return (
            <g key={k + "-" + i}>
              <rect x={x} y={y} width={w} height="23.700" fill={color} />
              {label && (
                <text x={x + w / 2} y={y + 18} textAnchor="middle" fontSize="16.800" fill={k === 0 ? "#7a0000" : "#2b2b10"}>{label}</text>
              )}
            </g>
          );
        }),
      )}
    </svg>
  );
}

function UProf() {
  return (
    <div className="mx-auto flex h-[642px] w-[975px] flex-col border border-[#aaa] bg-white font-['DejaVu_Sans_Condensed','DejaVu_Sans',sans-serif]">
      <div className="flex h-[31px] shrink-0 items-center pl-[8px] font-['Open_Sans',sans-serif] text-[11.900px] text-[#222]">
        <svg width="16" height="16" viewBox="0 0 16 16"><path d="M0 0h16v16l-4.500-4.500v-7h-7zM4 5.500v6.500h6.500L6.500 16H0V9.500z" fill="#222" /></svg>
        <span className="ml-[4px] whitespace-nowrap">AMDuProf - [C:/Temp/AMDuProf-...-02-2019_17-03-05.db]</span>
        <svg width="108" height="12" viewBox="0 0 108 12" className="ml-auto mr-[17px]" fill="none" stroke="#333">
          <path d="M1 6.500h10M48.500 1.500h9v9h-9zM97 1l10 10M107 1l-10 10" />
        </svg>
      </div>
      <div className="flex h-[56px] shrink-0 bg-[#24505d] text-[17px] font-bold text-[#c0c8cc]">
        <span className="w-[152px] text-center leading-[57px]">HOME</span>
        <span className="w-[153px] text-center leading-[57px]">PROFILE</span>
        <span className="w-[151px] text-center leading-[57px]">SUMMARY</span>
        <span className="w-[152px] border-b-[5px] border-[#5fc4c4] text-center leading-[53px] text-white">ANALYZE</span>
        <span className="ml-auto w-[152px] text-center leading-[57px]">SETTINGS</span>
      </div>
      <div className="flex min-h-0 flex-1">
        <div className="w-[157px] bg-[#c8c8c8]">
          <div className="h-[38px] whitespace-nowrap pl-[5px] text-[14.400px] leading-[40px] text-[#555]">Profile Samples</div>
          <div className="h-[41px] whitespace-nowrap border-l-[5px] border-[#4a3f44] bg-[#979797] pl-[5px] text-[14.800px] font-bold leading-[42px] text-[#111]">Call Graph Samples</div>
        </div>
        <div className="flex flex-1 flex-col">
          <div className="flex h-[39px] shrink-0 items-center whitespace-nowrap pl-[19px] text-[12.800px] text-[#222]">
            <span className="w-[57px]">Counters</span>
            <span className="h-[29px] w-[65px] overflow-hidden bg-[#e0e0e0] pl-[6px] leading-[30px]">CPU clocks</span>
            <span className="ml-[8px] w-[58px]">Process I</span>
            <span className="h-[29px] w-[56px] bg-[#e0e0e0] pl-[5px] leading-[30px]">3628</span>
            <span className="h-[29px] w-[9px] bg-[#8a9da0] pl-px leading-[20px]">'</span>
            <span className="ml-[8px] w-[88px] overflow-hidden">Show Flamegraph</span>
            <span className="ml-[4px] flex h-[15px] w-[31px] items-center justify-end rounded-full bg-[#2ecc71] pr-[3px]"><span className="h-[10px] w-[10px] rounded-full bg-white" /></span>
            <span className="ml-[9.500px] flex h-[28px] w-[353px] items-center border border-[#ddd] pl-[8px] text-[#888]">Search function name...</span>
            <span className="flex h-[28px] w-[48px] items-center justify-center bg-[#e0e0e0] text-[#888]">Clear</span>
          </div>
          <FlameGraph />
        </div>
      </div>
      <div className="flex h-[26px] shrink-0 items-center bg-[#00508c]">
        <span className="ml-[473px] h-[23px] w-px bg-[#b9cfe0]" />
        <span className="ml-[480px] h-[23px] w-px bg-[#b9cfe0]" />
        <svg width="9" height="9" viewBox="0 0 9 9" className="ml-auto mr-[3px] mt-[12px]" fill="#a8c4da"><path d="M7 0h2v2H7zM4 3.500h2v2H4zM7 3.500h2v2H7zM1 7h2v2H1zM4 7h2v2H4zM7 7h2v2H7z" /></svg>
      </div>
    </div>
  );
}

/* ---------- page ---------- */

export default function App() {
  return (
    <main className="flex h-[2525px] w-[1497px] flex-col bg-white">
      <section className={"flex h-[835px] flex-col text-[#222] " + SLIDE}>
        <Title className="pt-[84px]">Analysis applications</Title>
        <ul className="ml-[223px] mt-[19.500px] text-[28.300px] leading-none">
          <Item>Linux</Item>
          <SubItem>perf record / perf report</SubItem>
          <SubItem>KDAB hotspot</SubItem>
          <Item className="mt-[53.500px]">MacOS: Apple XCode Instruments</Item>
          <Item className="mt-[53.500px]">Windows: Visual Studio <span className="text-[#888]">(“dynamic instrumentation” / “collection via sampling”)</span></Item>
          <Item className="mt-[53.500px]">Intel-specific: vTune</Item>
          <Item className="mt-[53.500px]">AMD-specific: uProf</Item>
        </ul>
        <PageNumber n={10} />
      </section>
      <section className="flex h-[841px] flex-col">
        <Title className="mb-[34px] pt-[25px]">Bottom-up analysis</Title>
        <VTune />
        <PageNumber n={11} />
      </section>
      <section className="flex h-[841px] flex-col">
        <Title className="mb-[34px] pt-[37px]">Flame graphs</Title>
        <UProf />
        <PageNumber n={12} />
      </section>
    </main>
  );
}
